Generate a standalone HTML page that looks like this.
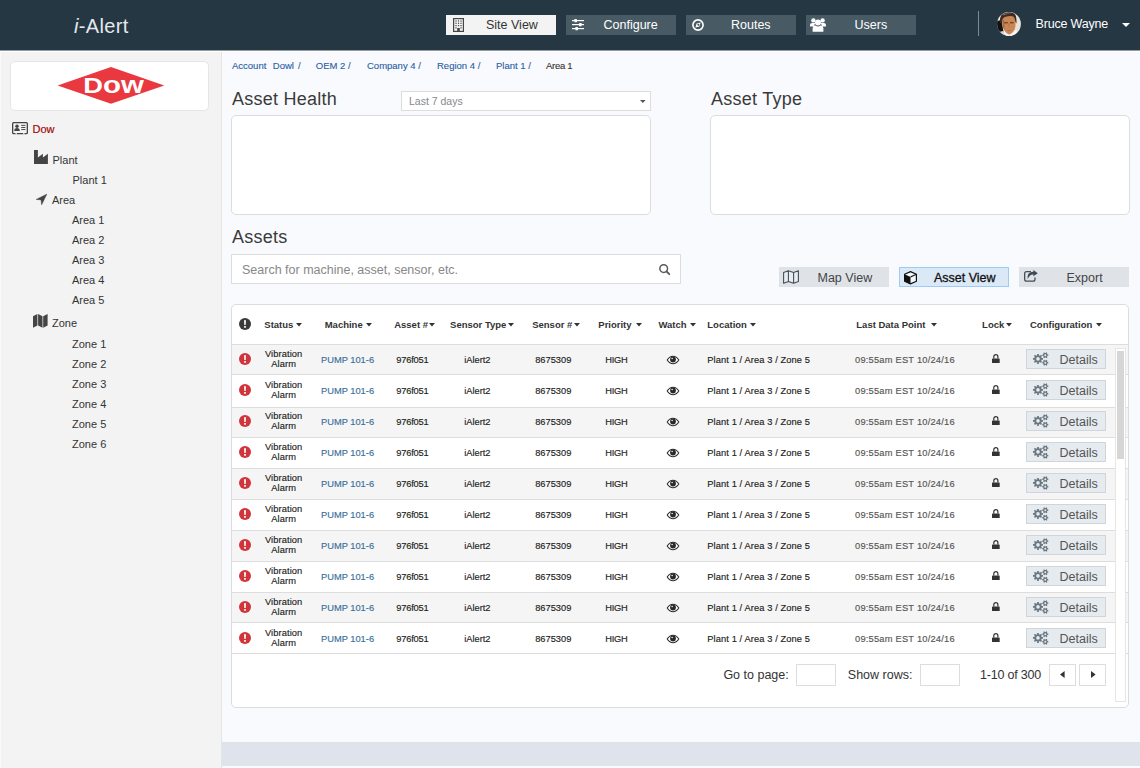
<!DOCTYPE html>
<html lang="en">
<head>
<meta charset="utf-8">
<title>i-Alert</title>
<style>
*{box-sizing:border-box;margin:0;padding:0}
html,body{width:1140px;height:768px;overflow:hidden}
body{position:relative;background:#f9fafd;font-family:"Liberation Sans",Arial,sans-serif;color:#333;font-size:12px}
svg{display:block;position:absolute;overflow:visible}
.t{position:absolute;white-space:nowrap}
#hdr{position:absolute;left:0;top:0;width:1140px;height:50px;background:#253743}
#brand{left:74px;top:14px;font-size:20px;line-height:24px;color:#e6e9ec;letter-spacing:.35px}
.nb{position:absolute;top:15px;width:110px;height:20px;background:#485b65}
.nb.on{background:#f3f3f3}
.nt{top:15px;font-size:12.5px;line-height:20px;color:#fff}
#hdiv{position:absolute;left:978px;top:11px;width:1px;height:25px;background:#7d8a93}
#uname{left:1035.5px;top:15px;font-size:12.5px;line-height:18px;color:#fff;letter-spacing:-.18px}
#ucaret{position:absolute;left:1122px;top:23px;width:0;height:0;border-left:4px solid transparent;border-right:4px solid transparent;border-top:4px solid #fff}
#side{position:absolute;left:0;top:50px;width:222px;height:718px;background:#f3f3f3;border-right:1px solid #e3e4e6;border-left:1px solid #fafafa}
#hl{position:absolute;left:0;top:50px;width:1140px;height:2px;background:#fff;border-top:1px solid #929ba2}
#logo{position:absolute;left:10px;top:61px;width:199px;height:50px;background:#fff;border:1px solid #e6e6e6;border-radius:5px}
.tn{font-size:11px;line-height:14px;color:#333}
#strip{position:absolute;left:222px;top:742px;width:918px;height:24px;background:#dfe3eb}
.bc{top:60px;font-size:9.5px;line-height:12px;color:#2a5fa6;-webkit-text-stroke:.12px}
.h2{font-size:18px;line-height:22px;color:#3a3a3a;letter-spacing:.25px}
.panel{position:absolute;background:#fff;border:1px solid #ddd;border-radius:5px}
.box{position:absolute;background:#fff;border:1px solid #ddd}
.btn{position:absolute;top:267px;width:110px;height:20px;background:#dfe3e8}
.bt{top:267.5px;font-size:12.5px;line-height:20px;color:#444}
.th{top:319px;font-size:9.5px;line-height:12px;font-weight:bold;color:#333}

.row{position:absolute;left:232px;width:896px;height:31px;border-bottom:1px solid #ddd}
.row.odd{background:#f5f5f5}
.td{font-size:9.3px;line-height:12px;color:#222;-webkit-text-stroke:.15px}
.det{position:absolute;left:1026px;width:80px;height:20px;background:#e6ebef;border:1px solid #cfd5da}
.dt{left:1059.5px;font-size:12.5px;line-height:20px;color:#555}
.ft{top:667px;font-size:12.5px;line-height:16px;color:#333}
</style>
</head>
<body>
<div id="hdr"></div>
<div class="t" id="brand"><i>i</i>-Alert</div>
<div class="nb on" style="left:446px"></div>
<div class="nb" style="left:566px"></div>
<div class="nb" style="left:686px"></div>
<div class="nb" style="left:806px"></div>
<div class="t nt" style="left:486px;color:#333">Site View</div>
<div class="t nt" style="left:603.5px">Configure</div>
<div class="t nt" style="left:731px">Routes</div>
<div class="t nt" style="left:854.5px">Users</div>
<svg style="left:453px;top:18px" width="11" height="14" viewBox="0 0 11 14"><rect x=".6" y=".6" width="9.8" height="12.8" fill="none" stroke="#454545" stroke-width="1.2"/><g fill="#454545"><rect x="2.4" y="2.4" width="1.2" height="1.2"/><rect x="4.9" y="2.4" width="1.2" height="1.2"/><rect x="7.4" y="2.4" width="1.2" height="1.2"/><rect x="2.4" y="4.7" width="1.2" height="1.2"/><rect x="4.9" y="4.7" width="1.2" height="1.2"/><rect x="7.4" y="4.7" width="1.2" height="1.2"/><rect x="2.4" y="7" width="1.2" height="1.2"/><rect x="4.9" y="7" width="1.2" height="1.2"/><rect x="7.4" y="7" width="1.2" height="1.2"/><rect x="2.4" y="9.3" width="1.2" height="1.2"/><rect x="7.4" y="9.3" width="1.2" height="1.2"/><rect x="4.2" y="10" width="2.6" height="3.4"/></g></svg>
<svg style="left:572px;top:18px" width="12" height="13" viewBox="0 0 12 13"><g fill="#fff"><rect x="0" y="2" width="12" height="1.2"/><rect x="0" y="6" width="12" height="1.2"/><rect x="0" y="10" width="12" height="1.2"/><rect x="2.4" y="1" width="2.6" height="3.2" rx=".4"/><rect x="7" y="5" width="2.6" height="3.2" rx=".4"/><rect x="3.4" y="9" width="2.6" height="3.2" rx=".4"/></g></svg>
<svg style="left:692px;top:19px" width="12" height="12" viewBox="0 0 12 12"><circle cx="6" cy="6" r="5.1" fill="none" stroke="#fff" stroke-width="1.6"/><path d="M8.6 3.4 L7.4 7.4 L3.4 8.6 L4.6 4.6 Z M6.4 4.7 a.95 .95 0 1 0 .01 0Z" fill="#fff" fill-rule="evenodd"/></svg>
<svg style="left:810px;top:17px" width="16" height="15" viewBox="0 0 16 15"><g fill="#fff"><circle cx="3.4" cy="3.4" r="2.2"/><circle cx="12.6" cy="3.4" r="2.2"/><path d="M0 9.4 V8 Q0 5.9 2.2 5.9 H4.4 Q5 5.9 5.5 6.2 Q4.2 7.3 4.2 9.4 Z"/><path d="M16 9.4 V8 Q16 5.9 13.8 5.9 H11.6 Q11 5.9 10.5 6.2 Q11.8 7.3 11.8 9.4 Z"/><circle cx="8" cy="5.6" r="3"/><path d="M2.6 14.6 V12 Q2.6 8.6 5.6 8.6 Q6.6 9.5 8 9.5 Q9.4 9.5 10.4 8.6 Q13.4 8.6 13.4 12 V14.6 Q13.4 14.8 12 14.8 H4 Q2.6 14.8 2.6 14.6Z"/></g></svg>
<div id="hdiv"></div>
<svg style="left:997px;top:12px" width="24" height="24" viewBox="0 0 24 24"><defs><clipPath id="av"><circle cx="12" cy="12" r="11.9"/></clipPath></defs><g clip-path="url(#av)"><rect width="24" height="24" fill="#e9e3dc"/><path d="M0 9 L4.5 8 L6.5 20 L3 22 L0 20Z" fill="#15110f"/><path d="M2 20 L6 19 L8 24 L2 24Z" fill="#cfd6e0"/><path d="M6.5 19 L9 24 H19 L20 18Z" fill="#f5f4f2"/><path d="M5.2 7 Q5.4 3.2 12 3.4 Q18.6 3.2 18.6 8 L18.4 14.5 Q18 18 16 20 Q13.5 22.8 11.8 22.4 Q9 21.6 7.4 18.6 Q5 14.5 5.2 7Z" fill="#cb8655"/><path d="M5.3 8 Q5.2 14 7.4 18.6 Q8 14 7 8Z" fill="#a96a40"/><path d="M3 10.5 Q2.2 2.4 8 .9 Q13 -.4 17 1.4 Q20 3 19.4 11.5 Q18.2 10 17.8 7 Q17.4 4.6 15.6 4.2 Q12 3.6 9.5 4.6 Q6.8 5 5.6 7 Q4.8 9.5 4.6 12Z" fill="#3b2b23"/><path d="M6 2.6 Q10 .6 15 1.6 Q10 1.8 6.6 3.4Z" fill="#7a6a60"/><path d="M7.2 10.8 H10.8 M13 10.8 H16.6" stroke="#4a2f25" stroke-width="1.1"/><path d="M10.2 18.6 H14" stroke="#a86846" stroke-width=".8"/><path d="M11.8 11 V15" stroke="#b87646" stroke-width=".9"/></g></svg>
<div class="t" id="uname">Bruce Wayne</div>
<div id="ucaret"></div>
<div id="side"></div>
<div id="hl"></div>
<div id="logo"></div>
<svg style="left:57px;top:67px" width="108" height="37" viewBox="0 0 108 37"><path d="M.6 18.4 L54 .1 L107.3 18.4 L54 36.8Z" fill="#e9383f"/><text x="26.2" y="25.9" font-family="Liberation Sans,Arial,sans-serif" font-weight="bold" fill="#fff" transform="translate(26.2 0) scale(1.27 1) translate(-26.2 0)"><tspan font-size="21.5">D</tspan><tspan font-size="23.2">ow</tspan></text></svg>
<svg style="left:12px;top:122.4px" width="16" height="12.4" viewBox="0 0 16 12.4"><rect x=".65" y=".65" width="14.7" height="11" rx="1" fill="none" stroke="#444" stroke-width="1.3"/><g fill="#444"><circle cx="5" cy="4.2" r="1.7"/><path d="M2.2 9 Q2.2 6.1 5 6.1 Q7.8 6.1 7.8 9Z"/><rect x="9.2" y="2.9" width="4.2" height=".95"/><rect x="9.2" y="5" width="4.2" height=".95"/><rect x="9.2" y="7.1" width="4.2" height=".95"/><rect x="3.4" y="11.2" width="1.6" height="1.2" fill="#f3f3f3"/><rect x="11" y="11.2" width="1.6" height="1.2" fill="#f3f3f3"/></g></svg>
<div class="t tn" style="left:32.5px;top:122px;color:#a10a0a;-webkit-text-stroke:.2px #a10a0a">Dow</div>
<svg style="left:33.5px;top:150px" width="14" height="14" viewBox="0 0 14 14"><path d="M0 0 H3.9 V7.6 L8.9 3.8 V7.6 L13.9 3.8 V14 H0Z" fill="#444"/></svg>
<div class="t tn" style="left:52.5px;top:153px">Plant</div>
<div class="t tn" style="left:72.5px;top:173px">Plant 1</div>
<svg style="left:36.3px;top:193.7px" width="11" height="11" viewBox="0 0 11 11"><path d="M10.9 0.1 L5.6 10.9 L5 5.9 L0.1 5.4Z" fill="#444" stroke="#444" stroke-width=".4" stroke-linejoin="round"/></svg>
<div class="t tn" style="left:52px;top:193px">Area</div>
<div class="t tn" style="left:72px;top:213px">Area 1</div>
<div class="t tn" style="left:72px;top:233px">Area 2</div>
<div class="t tn" style="left:72px;top:253px">Area 3</div>
<div class="t tn" style="left:72px;top:273px">Area 4</div>
<div class="t tn" style="left:72px;top:293px">Area 5</div>
<svg style="left:32.6px;top:314px" width="14.6" height="13.8" viewBox="0 0 14.6 13.8"><g fill="#444"><path d="M0 2.2 L4.4 0 V11.6 L0 13.8Z"/><path d="M5.1 0 L9.5 2.2 V13.8 L5.1 11.6Z"/><path d="M10.2 2.2 L14.6 0 V11.6 L10.2 13.8Z"/></g></svg>
<div class="t tn" style="left:52px;top:316px">Zone</div>
<div class="t tn" style="left:72px;top:337px">Zone 1</div>
<div class="t tn" style="left:72px;top:357px">Zone 2</div>
<div class="t tn" style="left:72px;top:377px">Zone 3</div>
<div class="t tn" style="left:72px;top:397px">Zone 4</div>
<div class="t tn" style="left:72px;top:417px">Zone 5</div>
<div class="t tn" style="left:72px;top:437px">Zone 6</div>
<div id="strip"></div>
<div class="t bc" style="left:232px">Account</div>
<div class="t bc" style="left:272.8px">Dowl</div>
<div class="t bc" style="left:298px">/</div>
<div class="t bc" style="left:315.8px">OEM 2 /</div>
<div class="t bc" style="left:367px">Company 4 /</div>
<div class="t bc" style="left:437px">Region 4 /</div>
<div class="t bc" style="left:496px">Plant 1 /</div>
<div class="t bc" style="left:546px;color:#333;letter-spacing:-.3px">Area 1</div>
<div class="t h2" style="left:232px;top:88px">Asset Health</div>
<div class="box" style="left:401px;top:91px;width:250px;height:20px"></div>
<div class="t" style="left:409px;top:95px;font-size:10.5px;line-height:12px;color:#888">Last 7 days</div>
<svg style="left:640px;top:100px" width="5.6" height="3" viewBox="0 0 5.6 3"><path d="M0 0H5.6L2.8 3Z" fill="#555"/></svg>
<div class="panel" style="left:231px;top:115px;width:420px;height:100px"></div>
<div class="t h2" style="left:711px;top:88px">Asset Type</div>
<div class="panel" style="left:710px;top:115px;width:420px;height:100px"></div>
<div class="t h2" style="left:232px;top:226px">Assets</div>
<div class="box" style="left:231px;top:254px;width:450px;height:30px"></div>
<div class="t" style="left:242px;top:262.6px;font-size:12.5px;line-height:14px;color:#888">Search for machine, asset, sensor, etc.</div>
<svg style="left:659px;top:264px" width="11" height="11" viewBox="0 0 11 11"><circle cx="4.7" cy="4.6" r="3.85" fill="none" stroke="#5a5a5a" stroke-width="1.5"/><path d="M7.6 7.5 L10.3 10.2" stroke="#5a5a5a" stroke-width="1.8" stroke-linecap="round"/></svg>
<div class="btn" style="left:779px"></div>
<div class="btn" style="left:899px;background:#dbe9f7;border:1px solid #9ecbf6"></div>
<div class="btn" style="left:1019px"></div>
<svg style="left:783px;top:270px" width="16" height="14" viewBox="0 0 16 14"><path d="M.6 2.6 L5.4 .7 L10.6 2.6 L15.4 .7 V11.4 L10.6 13.3 L5.4 11.4 L.6 13.3Z M5.4 .7 V11.4 M10.6 2.6 V13.3" fill="#e9edf2" stroke="#454f57" stroke-width="1.1" stroke-linejoin="round"/></svg>
<div class="t bt" style="left:817.5px">Map View</div>
<svg style="left:904px;top:270.5px" width="13" height="13.5" viewBox="0 0 13 13.5"><path d="M6.5 .6 L12.4 3.3 V10.2 L6.5 12.9 L.6 10.2 V3.3Z" fill="#f3f8fd" stroke="#111" stroke-width="1.2" stroke-linejoin="round"/><path d="M.6 3.3 L6.5 6 V12.9 L.6 10.2Z" fill="#111"/><path d="M6.5 6 L12.4 3.3" stroke="#111" stroke-width="1.2"/></svg>
<div class="t bt" style="left:934px;color:#111;-webkit-text-stroke:.3px #111">Asset View</div>
<svg style="left:1024.2px;top:270.2px" width="13.8" height="11.8" viewBox="0 0 13.8 11.8"><path d="M7 1.7 H2.6 Q.65 1.7 .65 3.6 V9.2 Q.65 11.1 2.6 11.1 H9 Q11 11.1 11 9.2 V7.6" fill="none" stroke="#454f56" stroke-width="1.3"/><path d="M9.4 0 L13.8 3.15 L9.4 6.3 V4.5 Q5.4 4.3 3.7 9.2 Q2.4 2.2 9.4 1.8Z" fill="#3f4950"/></svg>
<div class="t bt" style="left:1066.5px">Export</div>
<div class="panel" style="left:231px;top:304px;width:898px;height:404px"></div>
<div style="position:absolute;left:232px;top:344px;width:896px;height:1px;background:#ddd"></div>
<svg style="left:239px;top:318.4px" width="12" height="12" viewBox="0 0 12 12"><circle cx="6" cy="6" r="6" fill="#3a3a3a"/><path d="M5 2.2h2l-.3 4.9h-1.4z" fill="#fff"/><rect x="5.1" y="8" width="1.8" height="1.8" rx=".3" fill="#fff"/></svg>
<div class="t th" style="left:264.3px">Status</div>
<svg style="left:295.6px;top:323px" width="6" height="3.6" viewBox="0 0 6 3.6"><path d="M0 0H6L3 3.6Z" fill="#333"/></svg>
<div class="t th" style="left:324.7px">Machine</div>
<svg style="left:365.5px;top:323px" width="6" height="3.6" viewBox="0 0 6 3.6"><path d="M0 0H6L3 3.6Z" fill="#333"/></svg>
<div class="t th" style="left:394.2px">Asset #</div>
<svg style="left:429.3px;top:323px" width="6" height="3.6" viewBox="0 0 6 3.6"><path d="M0 0H6L3 3.6Z" fill="#333"/></svg>
<div class="t th" style="left:450.1px">Sensor Type</div>
<svg style="left:507.5px;top:323px" width="6" height="3.6" viewBox="0 0 6 3.6"><path d="M0 0H6L3 3.6Z" fill="#333"/></svg>
<div class="t th" style="left:532.2px">Sensor #</div>
<svg style="left:573.8px;top:323px" width="6" height="3.6" viewBox="0 0 6 3.6"><path d="M0 0H6L3 3.6Z" fill="#333"/></svg>
<div class="t th" style="left:598.3px">Priority</div>
<svg style="left:635.5px;top:323px" width="6" height="3.6" viewBox="0 0 6 3.6"><path d="M0 0H6L3 3.6Z" fill="#333"/></svg>
<div class="t th" style="left:658.4px">Watch</div>
<svg style="left:689.7px;top:323px" width="6" height="3.6" viewBox="0 0 6 3.6"><path d="M0 0H6L3 3.6Z" fill="#333"/></svg>
<div class="t th" style="left:707.3px">Location</div>
<svg style="left:750.3px;top:323px" width="6" height="3.6" viewBox="0 0 6 3.6"><path d="M0 0H6L3 3.6Z" fill="#333"/></svg>
<div class="t th" style="left:856.3px">Last Data Point</div>
<svg style="left:930.5px;top:323px" width="6" height="3.6" viewBox="0 0 6 3.6"><path d="M0 0H6L3 3.6Z" fill="#333"/></svg>
<div class="t th" style="left:982.1px">Lock</div>
<svg style="left:1006.3px;top:323px" width="6" height="3.6" viewBox="0 0 6 3.6"><path d="M0 0H6L3 3.6Z" fill="#333"/></svg>
<div class="t th" style="left:1030px">Configuration</div>
<svg style="left:1096.3px;top:323px" width="6" height="3.6" viewBox="0 0 6 3.6"><path d="M0 0H6L3 3.6Z" fill="#333"/></svg>
<div class="row odd" style="top:345px;height:30px"></div>
<svg style="left:239px;top:353.2px" width="12" height="12" viewBox="0 0 12 12"><circle cx="6" cy="6" r="6" fill="#d1343b"/><path d="M5 2.2h2l-.3 4.9h-1.4z" fill="#fff"/><rect x="5.1" y="8" width="1.8" height="1.8" rx=".3" fill="#fff"/></svg>
<div class="t td" style="left:264.3px;top:348.6px;width:38.7px;text-align:center;line-height:10.5px;white-space:normal;letter-spacing:.1px">Vibration Alarm</div>
<div class="t td" style="left:321px;top:353.6px;color:#3b6f9b">PUMP 101-6</div>
<div class="t td" style="left:396.3px;top:353.6px;letter-spacing:-.2px">976f051</div>
<div class="t td" style="left:464.2px;top:353.6px">iAlert2</div>
<div class="t td" style="left:535.2px;top:353.6px">8675309</div>
<div class="t td" style="left:605.3px;top:353.6px;letter-spacing:-.3px">HIGH</div>
<svg style="left:667px;top:356px" width="12" height="8" viewBox="0 0 12 8"><path d="M.2 4 Q2.6 .3 6 .3 Q9.4 .3 11.8 4 Q9.4 7.7 6 7.7 Q2.6 7.7 .2 4Z" fill="#fff" stroke="#2a2a2a" stroke-width="1.05"/><circle cx="6" cy="3.5" r="2.9" fill="#2a2a2a"/><circle cx="5.1" cy="2.4" r=".75" fill="#fff"/></svg>
<div class="t td" style="left:707.3px;top:353.6px;letter-spacing:.1px">Plant 1 / Area 3 / Zone 5</div>
<div class="t td" style="left:855px;top:353.6px;color:#555;letter-spacing:.22px">09:55am EST 10/24/16</div>
<svg style="left:992px;top:353.8px" width="7.7" height="9" viewBox="0 0 7.7 9"><path d="M1.8 4.6 V2.7 A2.05 2.05 0 0 1 5.9 2.7 V4.6" fill="none" stroke="#333" stroke-width="1.2"/><rect x="0" y="4.4" width="7.7" height="4.6" rx=".6" fill="#333"/></svg>
<div class="det" style="top:349px"></div>
<svg style="left:1033.4px;top:352px" width="15.4" height="13.8" viewBox="0 0 15.4 13.8"><path d="M10.02 6.00 L10.02 7.80 L8.69 7.71 L8.18 8.93 L9.18 9.82 L7.92 11.08 L7.03 10.08 L5.81 10.59 L5.90 11.92 L4.10 11.92 L4.19 10.59 L2.97 10.08 L2.08 11.08 L0.82 9.82 L1.82 8.93 L1.31 7.71 L-0.02 7.80 L-0.02 6.00 L1.31 6.09 L1.82 4.87 L0.82 3.98 L2.08 2.72 L2.97 3.72 L4.19 3.21 L4.10 1.88 L5.90 1.88 L5.81 3.21 L7.03 3.72 L7.92 2.72 L9.18 3.98 L8.18 4.87 L8.69 6.09Z M6.80 6.90 A1.8 1.8 0 1 0 3.20 6.90 A1.8 1.8 0 1 0 6.80 6.90Z M15.31 2.48 L15.31 3.92 L14.50 3.85 L13.96 4.78 L14.43 5.45 L13.18 6.17 L12.84 5.43 L11.76 5.43 L11.42 6.17 L10.17 5.45 L10.64 4.78 L10.10 3.85 L9.29 3.92 L9.29 2.48 L10.10 2.55 L10.64 1.62 L10.17 0.95 L11.42 0.23 L11.76 0.97 L12.84 0.97 L13.18 0.23 L14.43 0.95 L13.96 1.62 L14.50 2.55Z M13.30 3.20 A1 1 0 1 0 11.30 3.20 A1 1 0 1 0 13.30 3.20Z M15.31 9.98 L15.31 11.42 L14.50 11.35 L13.96 12.28 L14.43 12.95 L13.18 13.67 L12.84 12.93 L11.76 12.93 L11.42 13.67 L10.17 12.95 L10.64 12.28 L10.10 11.35 L9.29 11.42 L9.29 9.98 L10.10 10.05 L10.64 9.12 L10.17 8.45 L11.42 7.73 L11.76 8.47 L12.84 8.47 L13.18 7.73 L14.43 8.45 L13.96 9.12 L14.50 10.05Z M13.30 10.70 A1 1 0 1 0 11.30 10.70 A1 1 0 1 0 13.30 10.70Z" fill="#6b7780" fill-rule="evenodd"/></svg>
<div class="t dt" style="top:349.5px">Details</div>
<div class="row" style="top:375px;height:33px"></div>
<svg style="left:239px;top:384.2px" width="12" height="12" viewBox="0 0 12 12"><circle cx="6" cy="6" r="6" fill="#d1343b"/><path d="M5 2.2h2l-.3 4.9h-1.4z" fill="#fff"/><rect x="5.1" y="8" width="1.8" height="1.8" rx=".3" fill="#fff"/></svg>
<div class="t td" style="left:264.3px;top:379.6px;width:38.7px;text-align:center;line-height:10.5px;white-space:normal;letter-spacing:.1px">Vibration Alarm</div>
<div class="t td" style="left:321px;top:384.6px;color:#3b6f9b">PUMP 101-6</div>
<div class="t td" style="left:396.3px;top:384.6px;letter-spacing:-.2px">976f051</div>
<div class="t td" style="left:464.2px;top:384.6px">iAlert2</div>
<div class="t td" style="left:535.2px;top:384.6px">8675309</div>
<div class="t td" style="left:605.3px;top:384.6px;letter-spacing:-.3px">HIGH</div>
<svg style="left:667px;top:387px" width="12" height="8" viewBox="0 0 12 8"><path d="M.2 4 Q2.6 .3 6 .3 Q9.4 .3 11.8 4 Q9.4 7.7 6 7.7 Q2.6 7.7 .2 4Z" fill="#fff" stroke="#2a2a2a" stroke-width="1.05"/><circle cx="6" cy="3.5" r="2.9" fill="#2a2a2a"/><circle cx="5.1" cy="2.4" r=".75" fill="#fff"/></svg>
<div class="t td" style="left:707.3px;top:384.6px;letter-spacing:.1px">Plant 1 / Area 3 / Zone 5</div>
<div class="t td" style="left:855px;top:384.6px;color:#555;letter-spacing:.22px">09:55am EST 10/24/16</div>
<svg style="left:992px;top:384.8px" width="7.7" height="9" viewBox="0 0 7.7 9"><path d="M1.8 4.6 V2.7 A2.05 2.05 0 0 1 5.9 2.7 V4.6" fill="none" stroke="#333" stroke-width="1.2"/><rect x="0" y="4.4" width="7.7" height="4.6" rx=".6" fill="#333"/></svg>
<div class="det" style="top:380px"></div>
<svg style="left:1033.4px;top:383px" width="15.4" height="13.8" viewBox="0 0 15.4 13.8"><path d="M10.02 6.00 L10.02 7.80 L8.69 7.71 L8.18 8.93 L9.18 9.82 L7.92 11.08 L7.03 10.08 L5.81 10.59 L5.90 11.92 L4.10 11.92 L4.19 10.59 L2.97 10.08 L2.08 11.08 L0.82 9.82 L1.82 8.93 L1.31 7.71 L-0.02 7.80 L-0.02 6.00 L1.31 6.09 L1.82 4.87 L0.82 3.98 L2.08 2.72 L2.97 3.72 L4.19 3.21 L4.10 1.88 L5.90 1.88 L5.81 3.21 L7.03 3.72 L7.92 2.72 L9.18 3.98 L8.18 4.87 L8.69 6.09Z M6.80 6.90 A1.8 1.8 0 1 0 3.20 6.90 A1.8 1.8 0 1 0 6.80 6.90Z M15.31 2.48 L15.31 3.92 L14.50 3.85 L13.96 4.78 L14.43 5.45 L13.18 6.17 L12.84 5.43 L11.76 5.43 L11.42 6.17 L10.17 5.45 L10.64 4.78 L10.10 3.85 L9.29 3.92 L9.29 2.48 L10.10 2.55 L10.64 1.62 L10.17 0.95 L11.42 0.23 L11.76 0.97 L12.84 0.97 L13.18 0.23 L14.43 0.95 L13.96 1.62 L14.50 2.55Z M13.30 3.20 A1 1 0 1 0 11.30 3.20 A1 1 0 1 0 13.30 3.20Z M15.31 9.98 L15.31 11.42 L14.50 11.35 L13.96 12.28 L14.43 12.95 L13.18 13.67 L12.84 12.93 L11.76 12.93 L11.42 13.67 L10.17 12.95 L10.64 12.28 L10.10 11.35 L9.29 11.42 L9.29 9.98 L10.10 10.05 L10.64 9.12 L10.17 8.45 L11.42 7.73 L11.76 8.47 L12.84 8.47 L13.18 7.73 L14.43 8.45 L13.96 9.12 L14.50 10.05Z M13.30 10.70 A1 1 0 1 0 11.30 10.70 A1 1 0 1 0 13.30 10.70Z" fill="#6b7780" fill-rule="evenodd"/></svg>
<div class="t dt" style="top:380.5px">Details</div>
<div class="row odd" style="top:408px;height:30px"></div>
<svg style="left:239px;top:415.2px" width="12" height="12" viewBox="0 0 12 12"><circle cx="6" cy="6" r="6" fill="#d1343b"/><path d="M5 2.2h2l-.3 4.9h-1.4z" fill="#fff"/><rect x="5.1" y="8" width="1.8" height="1.8" rx=".3" fill="#fff"/></svg>
<div class="t td" style="left:264.3px;top:410.6px;width:38.7px;text-align:center;line-height:10.5px;white-space:normal;letter-spacing:.1px">Vibration Alarm</div>
<div class="t td" style="left:321px;top:415.6px;color:#3b6f9b">PUMP 101-6</div>
<div class="t td" style="left:396.3px;top:415.6px;letter-spacing:-.2px">976f051</div>
<div class="t td" style="left:464.2px;top:415.6px">iAlert2</div>
<div class="t td" style="left:535.2px;top:415.6px">8675309</div>
<div class="t td" style="left:605.3px;top:415.6px;letter-spacing:-.3px">HIGH</div>
<svg style="left:667px;top:418px" width="12" height="8" viewBox="0 0 12 8"><path d="M.2 4 Q2.6 .3 6 .3 Q9.4 .3 11.8 4 Q9.4 7.7 6 7.7 Q2.6 7.7 .2 4Z" fill="#fff" stroke="#2a2a2a" stroke-width="1.05"/><circle cx="6" cy="3.5" r="2.9" fill="#2a2a2a"/><circle cx="5.1" cy="2.4" r=".75" fill="#fff"/></svg>
<div class="t td" style="left:707.3px;top:415.6px;letter-spacing:.1px">Plant 1 / Area 3 / Zone 5</div>
<div class="t td" style="left:855px;top:415.6px;color:#555;letter-spacing:.22px">09:55am EST 10/24/16</div>
<svg style="left:992px;top:415.8px" width="7.7" height="9" viewBox="0 0 7.7 9"><path d="M1.8 4.6 V2.7 A2.05 2.05 0 0 1 5.9 2.7 V4.6" fill="none" stroke="#333" stroke-width="1.2"/><rect x="0" y="4.4" width="7.7" height="4.6" rx=".6" fill="#333"/></svg>
<div class="det" style="top:411px"></div>
<svg style="left:1033.4px;top:414px" width="15.4" height="13.8" viewBox="0 0 15.4 13.8"><path d="M10.02 6.00 L10.02 7.80 L8.69 7.71 L8.18 8.93 L9.18 9.82 L7.92 11.08 L7.03 10.08 L5.81 10.59 L5.90 11.92 L4.10 11.92 L4.19 10.59 L2.97 10.08 L2.08 11.08 L0.82 9.82 L1.82 8.93 L1.31 7.71 L-0.02 7.80 L-0.02 6.00 L1.31 6.09 L1.82 4.87 L0.82 3.98 L2.08 2.72 L2.97 3.72 L4.19 3.21 L4.10 1.88 L5.90 1.88 L5.81 3.21 L7.03 3.72 L7.92 2.72 L9.18 3.98 L8.18 4.87 L8.69 6.09Z M6.80 6.90 A1.8 1.8 0 1 0 3.20 6.90 A1.8 1.8 0 1 0 6.80 6.90Z M15.31 2.48 L15.31 3.92 L14.50 3.85 L13.96 4.78 L14.43 5.45 L13.18 6.17 L12.84 5.43 L11.76 5.43 L11.42 6.17 L10.17 5.45 L10.64 4.78 L10.10 3.85 L9.29 3.92 L9.29 2.48 L10.10 2.55 L10.64 1.62 L10.17 0.95 L11.42 0.23 L11.76 0.97 L12.84 0.97 L13.18 0.23 L14.43 0.95 L13.96 1.62 L14.50 2.55Z M13.30 3.20 A1 1 0 1 0 11.30 3.20 A1 1 0 1 0 13.30 3.20Z M15.31 9.98 L15.31 11.42 L14.50 11.35 L13.96 12.28 L14.43 12.95 L13.18 13.67 L12.84 12.93 L11.76 12.93 L11.42 13.67 L10.17 12.95 L10.64 12.28 L10.10 11.35 L9.29 11.42 L9.29 9.98 L10.10 10.05 L10.64 9.12 L10.17 8.45 L11.42 7.73 L11.76 8.47 L12.84 8.47 L13.18 7.73 L14.43 8.45 L13.96 9.12 L14.50 10.05Z M13.30 10.70 A1 1 0 1 0 11.30 10.70 A1 1 0 1 0 13.30 10.70Z" fill="#6b7780" fill-rule="evenodd"/></svg>
<div class="t dt" style="top:411.5px">Details</div>
<div class="row" style="top:438px;height:31px"></div>
<svg style="left:239px;top:446.2px" width="12" height="12" viewBox="0 0 12 12"><circle cx="6" cy="6" r="6" fill="#d1343b"/><path d="M5 2.2h2l-.3 4.9h-1.4z" fill="#fff"/><rect x="5.1" y="8" width="1.8" height="1.8" rx=".3" fill="#fff"/></svg>
<div class="t td" style="left:264.3px;top:441.6px;width:38.7px;text-align:center;line-height:10.5px;white-space:normal;letter-spacing:.1px">Vibration Alarm</div>
<div class="t td" style="left:321px;top:446.6px;color:#3b6f9b">PUMP 101-6</div>
<div class="t td" style="left:396.3px;top:446.6px;letter-spacing:-.2px">976f051</div>
<div class="t td" style="left:464.2px;top:446.6px">iAlert2</div>
<div class="t td" style="left:535.2px;top:446.6px">8675309</div>
<div class="t td" style="left:605.3px;top:446.6px;letter-spacing:-.3px">HIGH</div>
<svg style="left:667px;top:449px" width="12" height="8" viewBox="0 0 12 8"><path d="M.2 4 Q2.6 .3 6 .3 Q9.4 .3 11.8 4 Q9.4 7.7 6 7.7 Q2.6 7.7 .2 4Z" fill="#fff" stroke="#2a2a2a" stroke-width="1.05"/><circle cx="6" cy="3.5" r="2.9" fill="#2a2a2a"/><circle cx="5.1" cy="2.4" r=".75" fill="#fff"/></svg>
<div class="t td" style="left:707.3px;top:446.6px;letter-spacing:.1px">Plant 1 / Area 3 / Zone 5</div>
<div class="t td" style="left:855px;top:446.6px;color:#555;letter-spacing:.22px">09:55am EST 10/24/16</div>
<svg style="left:992px;top:446.8px" width="7.7" height="9" viewBox="0 0 7.7 9"><path d="M1.8 4.6 V2.7 A2.05 2.05 0 0 1 5.9 2.7 V4.6" fill="none" stroke="#333" stroke-width="1.2"/><rect x="0" y="4.4" width="7.7" height="4.6" rx=".6" fill="#333"/></svg>
<div class="det" style="top:442px"></div>
<svg style="left:1033.4px;top:445px" width="15.4" height="13.8" viewBox="0 0 15.4 13.8"><path d="M10.02 6.00 L10.02 7.80 L8.69 7.71 L8.18 8.93 L9.18 9.82 L7.92 11.08 L7.03 10.08 L5.81 10.59 L5.90 11.92 L4.10 11.92 L4.19 10.59 L2.97 10.08 L2.08 11.08 L0.82 9.82 L1.82 8.93 L1.31 7.71 L-0.02 7.80 L-0.02 6.00 L1.31 6.09 L1.82 4.87 L0.82 3.98 L2.08 2.72 L2.97 3.72 L4.19 3.21 L4.10 1.88 L5.90 1.88 L5.81 3.21 L7.03 3.72 L7.92 2.72 L9.18 3.98 L8.18 4.87 L8.69 6.09Z M6.80 6.90 A1.8 1.8 0 1 0 3.20 6.90 A1.8 1.8 0 1 0 6.80 6.90Z M15.31 2.48 L15.31 3.92 L14.50 3.85 L13.96 4.78 L14.43 5.45 L13.18 6.17 L12.84 5.43 L11.76 5.43 L11.42 6.17 L10.17 5.45 L10.64 4.78 L10.10 3.85 L9.29 3.92 L9.29 2.48 L10.10 2.55 L10.64 1.62 L10.17 0.95 L11.42 0.23 L11.76 0.97 L12.84 0.97 L13.18 0.23 L14.43 0.95 L13.96 1.62 L14.50 2.55Z M13.30 3.20 A1 1 0 1 0 11.30 3.20 A1 1 0 1 0 13.30 3.20Z M15.31 9.98 L15.31 11.42 L14.50 11.35 L13.96 12.28 L14.43 12.95 L13.18 13.67 L12.84 12.93 L11.76 12.93 L11.42 13.67 L10.17 12.95 L10.64 12.28 L10.10 11.35 L9.29 11.42 L9.29 9.98 L10.10 10.05 L10.64 9.12 L10.17 8.45 L11.42 7.73 L11.76 8.47 L12.84 8.47 L13.18 7.73 L14.43 8.45 L13.96 9.12 L14.50 10.05Z M13.30 10.70 A1 1 0 1 0 11.30 10.70 A1 1 0 1 0 13.30 10.70Z" fill="#6b7780" fill-rule="evenodd"/></svg>
<div class="t dt" style="top:442.5px">Details</div>
<div class="row odd" style="top:469px;height:31px"></div>
<svg style="left:239px;top:477.2px" width="12" height="12" viewBox="0 0 12 12"><circle cx="6" cy="6" r="6" fill="#d1343b"/><path d="M5 2.2h2l-.3 4.9h-1.4z" fill="#fff"/><rect x="5.1" y="8" width="1.8" height="1.8" rx=".3" fill="#fff"/></svg>
<div class="t td" style="left:264.3px;top:472.6px;width:38.7px;text-align:center;line-height:10.5px;white-space:normal;letter-spacing:.1px">Vibration Alarm</div>
<div class="t td" style="left:321px;top:477.6px;color:#3b6f9b">PUMP 101-6</div>
<div class="t td" style="left:396.3px;top:477.6px;letter-spacing:-.2px">976f051</div>
<div class="t td" style="left:464.2px;top:477.6px">iAlert2</div>
<div class="t td" style="left:535.2px;top:477.6px">8675309</div>
<div class="t td" style="left:605.3px;top:477.6px;letter-spacing:-.3px">HIGH</div>
<svg style="left:667px;top:480px" width="12" height="8" viewBox="0 0 12 8"><path d="M.2 4 Q2.6 .3 6 .3 Q9.4 .3 11.8 4 Q9.4 7.7 6 7.7 Q2.6 7.7 .2 4Z" fill="#fff" stroke="#2a2a2a" stroke-width="1.05"/><circle cx="6" cy="3.5" r="2.9" fill="#2a2a2a"/><circle cx="5.1" cy="2.4" r=".75" fill="#fff"/></svg>
<div class="t td" style="left:707.3px;top:477.6px;letter-spacing:.1px">Plant 1 / Area 3 / Zone 5</div>
<div class="t td" style="left:855px;top:477.6px;color:#555;letter-spacing:.22px">09:55am EST 10/24/16</div>
<svg style="left:992px;top:477.8px" width="7.7" height="9" viewBox="0 0 7.7 9"><path d="M1.8 4.6 V2.7 A2.05 2.05 0 0 1 5.9 2.7 V4.6" fill="none" stroke="#333" stroke-width="1.2"/><rect x="0" y="4.4" width="7.7" height="4.6" rx=".6" fill="#333"/></svg>
<div class="det" style="top:473px"></div>
<svg style="left:1033.4px;top:476px" width="15.4" height="13.8" viewBox="0 0 15.4 13.8"><path d="M10.02 6.00 L10.02 7.80 L8.69 7.71 L8.18 8.93 L9.18 9.82 L7.92 11.08 L7.03 10.08 L5.81 10.59 L5.90 11.92 L4.10 11.92 L4.19 10.59 L2.97 10.08 L2.08 11.08 L0.82 9.82 L1.82 8.93 L1.31 7.71 L-0.02 7.80 L-0.02 6.00 L1.31 6.09 L1.82 4.87 L0.82 3.98 L2.08 2.72 L2.97 3.72 L4.19 3.21 L4.10 1.88 L5.90 1.88 L5.81 3.21 L7.03 3.72 L7.92 2.72 L9.18 3.98 L8.18 4.87 L8.69 6.09Z M6.80 6.90 A1.8 1.8 0 1 0 3.20 6.90 A1.8 1.8 0 1 0 6.80 6.90Z M15.31 2.48 L15.31 3.92 L14.50 3.85 L13.96 4.78 L14.43 5.45 L13.18 6.17 L12.84 5.43 L11.76 5.43 L11.42 6.17 L10.17 5.45 L10.64 4.78 L10.10 3.85 L9.29 3.92 L9.29 2.48 L10.10 2.55 L10.64 1.62 L10.17 0.95 L11.42 0.23 L11.76 0.97 L12.84 0.97 L13.18 0.23 L14.43 0.95 L13.96 1.62 L14.50 2.55Z M13.30 3.20 A1 1 0 1 0 11.30 3.20 A1 1 0 1 0 13.30 3.20Z M15.31 9.98 L15.31 11.42 L14.50 11.35 L13.96 12.28 L14.43 12.95 L13.18 13.67 L12.84 12.93 L11.76 12.93 L11.42 13.67 L10.17 12.95 L10.64 12.28 L10.10 11.35 L9.29 11.42 L9.29 9.98 L10.10 10.05 L10.64 9.12 L10.17 8.45 L11.42 7.73 L11.76 8.47 L12.84 8.47 L13.18 7.73 L14.43 8.45 L13.96 9.12 L14.50 10.05Z M13.30 10.70 A1 1 0 1 0 11.30 10.70 A1 1 0 1 0 13.30 10.70Z" fill="#6b7780" fill-rule="evenodd"/></svg>
<div class="t dt" style="top:473.5px">Details</div>
<div class="row" style="top:500px;height:31px"></div>
<svg style="left:239px;top:508.2px" width="12" height="12" viewBox="0 0 12 12"><circle cx="6" cy="6" r="6" fill="#d1343b"/><path d="M5 2.2h2l-.3 4.9h-1.4z" fill="#fff"/><rect x="5.1" y="8" width="1.8" height="1.8" rx=".3" fill="#fff"/></svg>
<div class="t td" style="left:264.3px;top:503.6px;width:38.7px;text-align:center;line-height:10.5px;white-space:normal;letter-spacing:.1px">Vibration Alarm</div>
<div class="t td" style="left:321px;top:508.6px;color:#3b6f9b">PUMP 101-6</div>
<div class="t td" style="left:396.3px;top:508.6px;letter-spacing:-.2px">976f051</div>
<div class="t td" style="left:464.2px;top:508.6px">iAlert2</div>
<div class="t td" style="left:535.2px;top:508.6px">8675309</div>
<div class="t td" style="left:605.3px;top:508.6px;letter-spacing:-.3px">HIGH</div>
<svg style="left:667px;top:511px" width="12" height="8" viewBox="0 0 12 8"><path d="M.2 4 Q2.6 .3 6 .3 Q9.4 .3 11.8 4 Q9.4 7.7 6 7.7 Q2.6 7.7 .2 4Z" fill="#fff" stroke="#2a2a2a" stroke-width="1.05"/><circle cx="6" cy="3.5" r="2.9" fill="#2a2a2a"/><circle cx="5.1" cy="2.4" r=".75" fill="#fff"/></svg>
<div class="t td" style="left:707.3px;top:508.6px;letter-spacing:.1px">Plant 1 / Area 3 / Zone 5</div>
<div class="t td" style="left:855px;top:508.6px;color:#555;letter-spacing:.22px">09:55am EST 10/24/16</div>
<svg style="left:992px;top:508.8px" width="7.7" height="9" viewBox="0 0 7.7 9"><path d="M1.8 4.6 V2.7 A2.05 2.05 0 0 1 5.9 2.7 V4.6" fill="none" stroke="#333" stroke-width="1.2"/><rect x="0" y="4.4" width="7.7" height="4.6" rx=".6" fill="#333"/></svg>
<div class="det" style="top:504px"></div>
<svg style="left:1033.4px;top:507px" width="15.4" height="13.8" viewBox="0 0 15.4 13.8"><path d="M10.02 6.00 L10.02 7.80 L8.69 7.71 L8.18 8.93 L9.18 9.82 L7.92 11.08 L7.03 10.08 L5.81 10.59 L5.90 11.92 L4.10 11.92 L4.19 10.59 L2.97 10.08 L2.08 11.08 L0.82 9.82 L1.82 8.93 L1.31 7.71 L-0.02 7.80 L-0.02 6.00 L1.31 6.09 L1.82 4.87 L0.82 3.98 L2.08 2.72 L2.97 3.72 L4.19 3.21 L4.10 1.88 L5.90 1.88 L5.81 3.21 L7.03 3.72 L7.92 2.72 L9.18 3.98 L8.18 4.87 L8.69 6.09Z M6.80 6.90 A1.8 1.8 0 1 0 3.20 6.90 A1.8 1.8 0 1 0 6.80 6.90Z M15.31 2.48 L15.31 3.92 L14.50 3.85 L13.96 4.78 L14.43 5.45 L13.18 6.17 L12.84 5.43 L11.76 5.43 L11.42 6.17 L10.17 5.45 L10.64 4.78 L10.10 3.85 L9.29 3.92 L9.29 2.48 L10.10 2.55 L10.64 1.62 L10.17 0.95 L11.42 0.23 L11.76 0.97 L12.84 0.97 L13.18 0.23 L14.43 0.95 L13.96 1.62 L14.50 2.55Z M13.30 3.20 A1 1 0 1 0 11.30 3.20 A1 1 0 1 0 13.30 3.20Z M15.31 9.98 L15.31 11.42 L14.50 11.35 L13.96 12.28 L14.43 12.95 L13.18 13.67 L12.84 12.93 L11.76 12.93 L11.42 13.67 L10.17 12.95 L10.64 12.28 L10.10 11.35 L9.29 11.42 L9.29 9.98 L10.10 10.05 L10.64 9.12 L10.17 8.45 L11.42 7.73 L11.76 8.47 L12.84 8.47 L13.18 7.73 L14.43 8.45 L13.96 9.12 L14.50 10.05Z M13.30 10.70 A1 1 0 1 0 11.30 10.70 A1 1 0 1 0 13.30 10.70Z" fill="#6b7780" fill-rule="evenodd"/></svg>
<div class="t dt" style="top:504.5px">Details</div>
<div class="row odd" style="top:531px;height:31px"></div>
<svg style="left:239px;top:539.2px" width="12" height="12" viewBox="0 0 12 12"><circle cx="6" cy="6" r="6" fill="#d1343b"/><path d="M5 2.2h2l-.3 4.9h-1.4z" fill="#fff"/><rect x="5.1" y="8" width="1.8" height="1.8" rx=".3" fill="#fff"/></svg>
<div class="t td" style="left:264.3px;top:534.6px;width:38.7px;text-align:center;line-height:10.5px;white-space:normal;letter-spacing:.1px">Vibration Alarm</div>
<div class="t td" style="left:321px;top:539.6px;color:#3b6f9b">PUMP 101-6</div>
<div class="t td" style="left:396.3px;top:539.6px;letter-spacing:-.2px">976f051</div>
<div class="t td" style="left:464.2px;top:539.6px">iAlert2</div>
<div class="t td" style="left:535.2px;top:539.6px">8675309</div>
<div class="t td" style="left:605.3px;top:539.6px;letter-spacing:-.3px">HIGH</div>
<svg style="left:667px;top:542px" width="12" height="8" viewBox="0 0 12 8"><path d="M.2 4 Q2.6 .3 6 .3 Q9.4 .3 11.8 4 Q9.4 7.7 6 7.7 Q2.6 7.7 .2 4Z" fill="#fff" stroke="#2a2a2a" stroke-width="1.05"/><circle cx="6" cy="3.5" r="2.9" fill="#2a2a2a"/><circle cx="5.1" cy="2.4" r=".75" fill="#fff"/></svg>
<div class="t td" style="left:707.3px;top:539.6px;letter-spacing:.1px">Plant 1 / Area 3 / Zone 5</div>
<div class="t td" style="left:855px;top:539.6px;color:#555;letter-spacing:.22px">09:55am EST 10/24/16</div>
<svg style="left:992px;top:539.8px" width="7.7" height="9" viewBox="0 0 7.7 9"><path d="M1.8 4.6 V2.7 A2.05 2.05 0 0 1 5.9 2.7 V4.6" fill="none" stroke="#333" stroke-width="1.2"/><rect x="0" y="4.4" width="7.7" height="4.6" rx=".6" fill="#333"/></svg>
<div class="det" style="top:535px"></div>
<svg style="left:1033.4px;top:538px" width="15.4" height="13.8" viewBox="0 0 15.4 13.8"><path d="M10.02 6.00 L10.02 7.80 L8.69 7.71 L8.18 8.93 L9.18 9.82 L7.92 11.08 L7.03 10.08 L5.81 10.59 L5.90 11.92 L4.10 11.92 L4.19 10.59 L2.97 10.08 L2.08 11.08 L0.82 9.82 L1.82 8.93 L1.31 7.71 L-0.02 7.80 L-0.02 6.00 L1.31 6.09 L1.82 4.87 L0.82 3.98 L2.08 2.72 L2.97 3.72 L4.19 3.21 L4.10 1.88 L5.90 1.88 L5.81 3.21 L7.03 3.72 L7.92 2.72 L9.18 3.98 L8.18 4.87 L8.69 6.09Z M6.80 6.90 A1.8 1.8 0 1 0 3.20 6.90 A1.8 1.8 0 1 0 6.80 6.90Z M15.31 2.48 L15.31 3.92 L14.50 3.85 L13.96 4.78 L14.43 5.45 L13.18 6.17 L12.84 5.43 L11.76 5.43 L11.42 6.17 L10.17 5.45 L10.64 4.78 L10.10 3.85 L9.29 3.92 L9.29 2.48 L10.10 2.55 L10.64 1.62 L10.17 0.95 L11.42 0.23 L11.76 0.97 L12.84 0.97 L13.18 0.23 L14.43 0.95 L13.96 1.62 L14.50 2.55Z M13.30 3.20 A1 1 0 1 0 11.30 3.20 A1 1 0 1 0 13.30 3.20Z M15.31 9.98 L15.31 11.42 L14.50 11.35 L13.96 12.28 L14.43 12.95 L13.18 13.67 L12.84 12.93 L11.76 12.93 L11.42 13.67 L10.17 12.95 L10.64 12.28 L10.10 11.35 L9.29 11.42 L9.29 9.98 L10.10 10.05 L10.64 9.12 L10.17 8.45 L11.42 7.73 L11.76 8.47 L12.84 8.47 L13.18 7.73 L14.43 8.45 L13.96 9.12 L14.50 10.05Z M13.30 10.70 A1 1 0 1 0 11.30 10.70 A1 1 0 1 0 13.30 10.70Z" fill="#6b7780" fill-rule="evenodd"/></svg>
<div class="t dt" style="top:535.5px">Details</div>
<div class="row" style="top:562px;height:31px"></div>
<svg style="left:239px;top:570.2px" width="12" height="12" viewBox="0 0 12 12"><circle cx="6" cy="6" r="6" fill="#d1343b"/><path d="M5 2.2h2l-.3 4.9h-1.4z" fill="#fff"/><rect x="5.1" y="8" width="1.8" height="1.8" rx=".3" fill="#fff"/></svg>
<div class="t td" style="left:264.3px;top:565.6px;width:38.7px;text-align:center;line-height:10.5px;white-space:normal;letter-spacing:.1px">Vibration Alarm</div>
<div class="t td" style="left:321px;top:570.6px;color:#3b6f9b">PUMP 101-6</div>
<div class="t td" style="left:396.3px;top:570.6px;letter-spacing:-.2px">976f051</div>
<div class="t td" style="left:464.2px;top:570.6px">iAlert2</div>
<div class="t td" style="left:535.2px;top:570.6px">8675309</div>
<div class="t td" style="left:605.3px;top:570.6px;letter-spacing:-.3px">HIGH</div>
<svg style="left:667px;top:573px" width="12" height="8" viewBox="0 0 12 8"><path d="M.2 4 Q2.6 .3 6 .3 Q9.4 .3 11.8 4 Q9.4 7.7 6 7.7 Q2.6 7.7 .2 4Z" fill="#fff" stroke="#2a2a2a" stroke-width="1.05"/><circle cx="6" cy="3.5" r="2.9" fill="#2a2a2a"/><circle cx="5.1" cy="2.4" r=".75" fill="#fff"/></svg>
<div class="t td" style="left:707.3px;top:570.6px;letter-spacing:.1px">Plant 1 / Area 3 / Zone 5</div>
<div class="t td" style="left:855px;top:570.6px;color:#555;letter-spacing:.22px">09:55am EST 10/24/16</div>
<svg style="left:992px;top:570.8px" width="7.7" height="9" viewBox="0 0 7.7 9"><path d="M1.8 4.6 V2.7 A2.05 2.05 0 0 1 5.9 2.7 V4.6" fill="none" stroke="#333" stroke-width="1.2"/><rect x="0" y="4.4" width="7.7" height="4.6" rx=".6" fill="#333"/></svg>
<div class="det" style="top:566px"></div>
<svg style="left:1033.4px;top:569px" width="15.4" height="13.8" viewBox="0 0 15.4 13.8"><path d="M10.02 6.00 L10.02 7.80 L8.69 7.71 L8.18 8.93 L9.18 9.82 L7.92 11.08 L7.03 10.08 L5.81 10.59 L5.90 11.92 L4.10 11.92 L4.19 10.59 L2.97 10.08 L2.08 11.08 L0.82 9.82 L1.82 8.93 L1.31 7.71 L-0.02 7.80 L-0.02 6.00 L1.31 6.09 L1.82 4.87 L0.82 3.98 L2.08 2.72 L2.97 3.72 L4.19 3.21 L4.10 1.88 L5.90 1.88 L5.81 3.21 L7.03 3.72 L7.92 2.72 L9.18 3.98 L8.18 4.87 L8.69 6.09Z M6.80 6.90 A1.8 1.8 0 1 0 3.20 6.90 A1.8 1.8 0 1 0 6.80 6.90Z M15.31 2.48 L15.31 3.92 L14.50 3.85 L13.96 4.78 L14.43 5.45 L13.18 6.17 L12.84 5.43 L11.76 5.43 L11.42 6.17 L10.17 5.45 L10.64 4.78 L10.10 3.85 L9.29 3.92 L9.29 2.48 L10.10 2.55 L10.64 1.62 L10.17 0.95 L11.42 0.23 L11.76 0.97 L12.84 0.97 L13.18 0.23 L14.43 0.95 L13.96 1.62 L14.50 2.55Z M13.30 3.20 A1 1 0 1 0 11.30 3.20 A1 1 0 1 0 13.30 3.20Z M15.31 9.98 L15.31 11.42 L14.50 11.35 L13.96 12.28 L14.43 12.95 L13.18 13.67 L12.84 12.93 L11.76 12.93 L11.42 13.67 L10.17 12.95 L10.64 12.28 L10.10 11.35 L9.29 11.42 L9.29 9.98 L10.10 10.05 L10.64 9.12 L10.17 8.45 L11.42 7.73 L11.76 8.47 L12.84 8.47 L13.18 7.73 L14.43 8.45 L13.96 9.12 L14.50 10.05Z M13.30 10.70 A1 1 0 1 0 11.30 10.70 A1 1 0 1 0 13.30 10.70Z" fill="#6b7780" fill-rule="evenodd"/></svg>
<div class="t dt" style="top:566.5px">Details</div>
<div class="row odd" style="top:593px;height:30px"></div>
<svg style="left:239px;top:601.2px" width="12" height="12" viewBox="0 0 12 12"><circle cx="6" cy="6" r="6" fill="#d1343b"/><path d="M5 2.2h2l-.3 4.9h-1.4z" fill="#fff"/><rect x="5.1" y="8" width="1.8" height="1.8" rx=".3" fill="#fff"/></svg>
<div class="t td" style="left:264.3px;top:596.6px;width:38.7px;text-align:center;line-height:10.5px;white-space:normal;letter-spacing:.1px">Vibration Alarm</div>
<div class="t td" style="left:321px;top:601.6px;color:#3b6f9b">PUMP 101-6</div>
<div class="t td" style="left:396.3px;top:601.6px;letter-spacing:-.2px">976f051</div>
<div class="t td" style="left:464.2px;top:601.6px">iAlert2</div>
<div class="t td" style="left:535.2px;top:601.6px">8675309</div>
<div class="t td" style="left:605.3px;top:601.6px;letter-spacing:-.3px">HIGH</div>
<svg style="left:667px;top:604px" width="12" height="8" viewBox="0 0 12 8"><path d="M.2 4 Q2.6 .3 6 .3 Q9.4 .3 11.8 4 Q9.4 7.7 6 7.7 Q2.6 7.7 .2 4Z" fill="#fff" stroke="#2a2a2a" stroke-width="1.05"/><circle cx="6" cy="3.5" r="2.9" fill="#2a2a2a"/><circle cx="5.1" cy="2.4" r=".75" fill="#fff"/></svg>
<div class="t td" style="left:707.3px;top:601.6px;letter-spacing:.1px">Plant 1 / Area 3 / Zone 5</div>
<div class="t td" style="left:855px;top:601.6px;color:#555;letter-spacing:.22px">09:55am EST 10/24/16</div>
<svg style="left:992px;top:601.8px" width="7.7" height="9" viewBox="0 0 7.7 9"><path d="M1.8 4.6 V2.7 A2.05 2.05 0 0 1 5.9 2.7 V4.6" fill="none" stroke="#333" stroke-width="1.2"/><rect x="0" y="4.4" width="7.7" height="4.6" rx=".6" fill="#333"/></svg>
<div class="det" style="top:597px"></div>
<svg style="left:1033.4px;top:600px" width="15.4" height="13.8" viewBox="0 0 15.4 13.8"><path d="M10.02 6.00 L10.02 7.80 L8.69 7.71 L8.18 8.93 L9.18 9.82 L7.92 11.08 L7.03 10.08 L5.81 10.59 L5.90 11.92 L4.10 11.92 L4.19 10.59 L2.97 10.08 L2.08 11.08 L0.82 9.82 L1.82 8.93 L1.31 7.71 L-0.02 7.80 L-0.02 6.00 L1.31 6.09 L1.82 4.87 L0.82 3.98 L2.08 2.72 L2.97 3.72 L4.19 3.21 L4.10 1.88 L5.90 1.88 L5.81 3.21 L7.03 3.72 L7.92 2.72 L9.18 3.98 L8.18 4.87 L8.69 6.09Z M6.80 6.90 A1.8 1.8 0 1 0 3.20 6.90 A1.8 1.8 0 1 0 6.80 6.90Z M15.31 2.48 L15.31 3.92 L14.50 3.85 L13.96 4.78 L14.43 5.45 L13.18 6.17 L12.84 5.43 L11.76 5.43 L11.42 6.17 L10.17 5.45 L10.64 4.78 L10.10 3.85 L9.29 3.92 L9.29 2.48 L10.10 2.55 L10.64 1.62 L10.17 0.95 L11.42 0.23 L11.76 0.97 L12.84 0.97 L13.18 0.23 L14.43 0.95 L13.96 1.62 L14.50 2.55Z M13.30 3.20 A1 1 0 1 0 11.30 3.20 A1 1 0 1 0 13.30 3.20Z M15.31 9.98 L15.31 11.42 L14.50 11.35 L13.96 12.28 L14.43 12.95 L13.18 13.67 L12.84 12.93 L11.76 12.93 L11.42 13.67 L10.17 12.95 L10.64 12.28 L10.10 11.35 L9.29 11.42 L9.29 9.98 L10.10 10.05 L10.64 9.12 L10.17 8.45 L11.42 7.73 L11.76 8.47 L12.84 8.47 L13.18 7.73 L14.43 8.45 L13.96 9.12 L14.50 10.05Z M13.30 10.70 A1 1 0 1 0 11.30 10.70 A1 1 0 1 0 13.30 10.70Z" fill="#6b7780" fill-rule="evenodd"/></svg>
<div class="t dt" style="top:597.5px">Details</div>
<div class="row" style="top:623px;height:31px"></div>
<svg style="left:239px;top:632.2px" width="12" height="12" viewBox="0 0 12 12"><circle cx="6" cy="6" r="6" fill="#d1343b"/><path d="M5 2.2h2l-.3 4.9h-1.4z" fill="#fff"/><rect x="5.1" y="8" width="1.8" height="1.8" rx=".3" fill="#fff"/></svg>
<div class="t td" style="left:264.3px;top:627.6px;width:38.7px;text-align:center;line-height:10.5px;white-space:normal;letter-spacing:.1px">Vibration Alarm</div>
<div class="t td" style="left:321px;top:632.6px;color:#3b6f9b">PUMP 101-6</div>
<div class="t td" style="left:396.3px;top:632.6px;letter-spacing:-.2px">976f051</div>
<div class="t td" style="left:464.2px;top:632.6px">iAlert2</div>
<div class="t td" style="left:535.2px;top:632.6px">8675309</div>
<div class="t td" style="left:605.3px;top:632.6px;letter-spacing:-.3px">HIGH</div>
<svg style="left:667px;top:635px" width="12" height="8" viewBox="0 0 12 8"><path d="M.2 4 Q2.6 .3 6 .3 Q9.4 .3 11.8 4 Q9.4 7.7 6 7.7 Q2.6 7.7 .2 4Z" fill="#fff" stroke="#2a2a2a" stroke-width="1.05"/><circle cx="6" cy="3.5" r="2.9" fill="#2a2a2a"/><circle cx="5.1" cy="2.4" r=".75" fill="#fff"/></svg>
<div class="t td" style="left:707.3px;top:632.6px;letter-spacing:.1px">Plant 1 / Area 3 / Zone 5</div>
<div class="t td" style="left:855px;top:632.6px;color:#555;letter-spacing:.22px">09:55am EST 10/24/16</div>
<svg style="left:992px;top:632.8px" width="7.7" height="9" viewBox="0 0 7.7 9"><path d="M1.8 4.6 V2.7 A2.05 2.05 0 0 1 5.9 2.7 V4.6" fill="none" stroke="#333" stroke-width="1.2"/><rect x="0" y="4.4" width="7.7" height="4.6" rx=".6" fill="#333"/></svg>
<div class="det" style="top:628px"></div>
<svg style="left:1033.4px;top:631px" width="15.4" height="13.8" viewBox="0 0 15.4 13.8"><path d="M10.02 6.00 L10.02 7.80 L8.69 7.71 L8.18 8.93 L9.18 9.82 L7.92 11.08 L7.03 10.08 L5.81 10.59 L5.90 11.92 L4.10 11.92 L4.19 10.59 L2.97 10.08 L2.08 11.08 L0.82 9.82 L1.82 8.93 L1.31 7.71 L-0.02 7.80 L-0.02 6.00 L1.31 6.09 L1.82 4.87 L0.82 3.98 L2.08 2.72 L2.97 3.72 L4.19 3.21 L4.10 1.88 L5.90 1.88 L5.81 3.21 L7.03 3.72 L7.92 2.72 L9.18 3.98 L8.18 4.87 L8.69 6.09Z M6.80 6.90 A1.8 1.8 0 1 0 3.20 6.90 A1.8 1.8 0 1 0 6.80 6.90Z M15.31 2.48 L15.31 3.92 L14.50 3.85 L13.96 4.78 L14.43 5.45 L13.18 6.17 L12.84 5.43 L11.76 5.43 L11.42 6.17 L10.17 5.45 L10.64 4.78 L10.10 3.85 L9.29 3.92 L9.29 2.48 L10.10 2.55 L10.64 1.62 L10.17 0.95 L11.42 0.23 L11.76 0.97 L12.84 0.97 L13.18 0.23 L14.43 0.95 L13.96 1.62 L14.50 2.55Z M13.30 3.20 A1 1 0 1 0 11.30 3.20 A1 1 0 1 0 13.30 3.20Z M15.31 9.98 L15.31 11.42 L14.50 11.35 L13.96 12.28 L14.43 12.95 L13.18 13.67 L12.84 12.93 L11.76 12.93 L11.42 13.67 L10.17 12.95 L10.64 12.28 L10.10 11.35 L9.29 11.42 L9.29 9.98 L10.10 10.05 L10.64 9.12 L10.17 8.45 L11.42 7.73 L11.76 8.47 L12.84 8.47 L13.18 7.73 L14.43 8.45 L13.96 9.12 L14.50 10.05Z M13.30 10.70 A1 1 0 1 0 11.30 10.70 A1 1 0 1 0 13.30 10.70Z" fill="#6b7780" fill-rule="evenodd"/></svg>
<div class="t dt" style="top:628.5px">Details</div>
<div style="position:absolute;left:1115px;top:348px;width:11px;height:354px;background:#fff;border:1px solid #e6e6e6"></div>
<div style="position:absolute;left:1117px;top:351px;width:7px;height:108px;background:#d6d6d6"></div>
<div class="t ft" style="left:723.4px">Go to page:</div>
<div class="box" style="left:796px;top:664px;width:40px;height:22px"></div>
<div class="t ft" style="left:847.8px">Show rows:</div>
<div class="box" style="left:920px;top:664px;width:40px;height:22px"></div>
<div class="t ft" style="left:980px;letter-spacing:-.2px">1-10 of 300</div>
<div class="box" style="left:1049px;top:664px;width:27px;height:22px"></div>
<div class="box" style="left:1079px;top:664px;width:27px;height:22px"></div>
<svg style="left:1059.8px;top:671.3px" width="4.6" height="7" viewBox="0 0 4.6 7"><path d="M4.6 0V7L0 3.5Z" fill="#333"/></svg>
<svg style="left:1090.6px;top:671.3px" width="4.6" height="7" viewBox="0 0 4.6 7"><path d="M0 0V7L4.6 3.5Z" fill="#333"/></svg>
</body>
</html>
